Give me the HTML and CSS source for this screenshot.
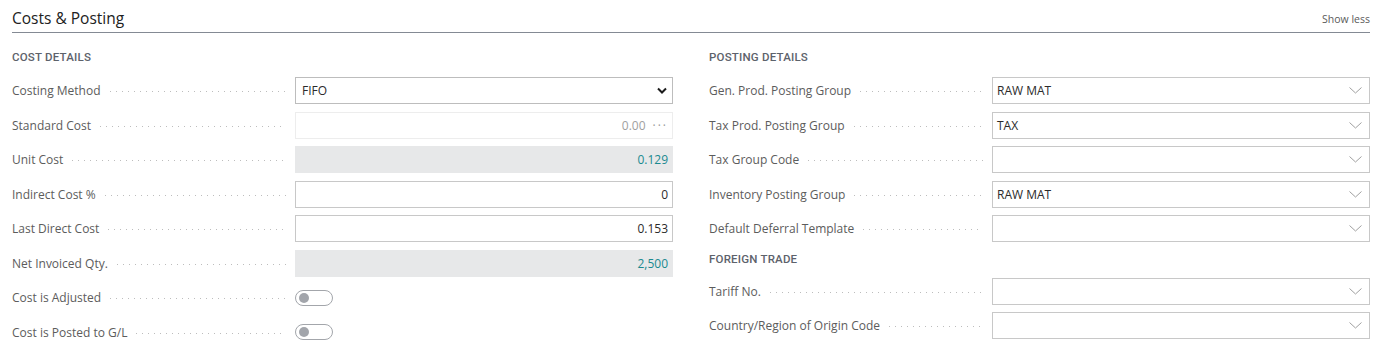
FILE: index.html
```html
<!DOCTYPE html>
<html>
<head>
<meta charset="utf-8">
<link rel="stylesheet" href="styles.css">
</head>
<body>
<div class="page">
  <div class="header">
    <h2 class="title">Costs &amp; Posting</h2>
    <span class="show-less">Show less</span>
  </div>
  <div class="cols">
    <div class="col">
      <div class="group-title">COST DETAILS</div>
      <div class="row">
        <div class="label"><span>Costing Method</span><i class="dots"></i></div>
        <div class="field select"><span class="val">FIFO</span>
          <svg class="chev-bold" width="10" height="7" viewBox="0 0 10 7"><polyline points="1,1.5 5,5.5 9,1.5" fill="none" stroke="#1b1b1b" stroke-width="2"/></svg>
        </div>
      </div>
      <div class="row">
        <div class="label"><span>Standard Cost</span><i class="dots"></i></div>
        <div class="field disabled right"><span class="val">0.00</span><span class="ellip">&middot;&middot;&middot;</span></div>
      </div>
      <div class="row">
        <div class="label"><span>Unit Cost</span><i class="dots"></i></div>
        <div class="field readonly right"><span class="val">0.129</span></div>
      </div>
      <div class="row">
        <div class="label"><span>Indirect Cost %</span><i class="dots"></i></div>
        <div class="field right"><span class="val">0</span></div>
      </div>
      <div class="row">
        <div class="label"><span>Last Direct Cost</span><i class="dots"></i></div>
        <div class="field right"><span class="val">0.153</span></div>
      </div>
      <div class="row">
        <div class="label"><span>Net Invoiced Qty.</span><i class="dots"></i></div>
        <div class="field readonly right"><span class="val">2,500</span></div>
      </div>
      <div class="row">
        <div class="label"><span>Cost is Adjusted</span><i class="dots"></i></div>
        <div class="toggle-wrap"><span class="toggle"><span class="knob"></span></span></div>
      </div>
      <div class="row">
        <div class="label"><span>Cost is Posted to G/L</span><i class="dots"></i></div>
        <div class="toggle-wrap"><span class="toggle"><span class="knob"></span></span></div>
      </div>
    </div>
    <div class="col">
      <div class="group-title">POSTING DETAILS</div>
      <div class="row">
        <div class="label"><span>Gen. Prod. Posting Group</span><i class="dots"></i></div>
        <div class="field lookup"><span class="val">RAW MAT</span>
          <svg class="chev" width="13" height="7" viewBox="0 0 13 7"><polyline points="0.5,0.5 6.5,6 12.5,0.5" fill="none" stroke="#a0a0a0" stroke-width="1"/></svg>
        </div>
      </div>
      <div class="row">
        <div class="label"><span>Tax Prod. Posting Group</span><i class="dots"></i></div>
        <div class="field lookup"><span class="val">TAX</span>
          <svg class="chev" width="13" height="7" viewBox="0 0 13 7"><polyline points="0.5,0.5 6.5,6 12.5,0.5" fill="none" stroke="#a0a0a0" stroke-width="1"/></svg>
        </div>
      </div>
      <div class="row">
        <div class="label"><span>Tax Group Code</span><i class="dots"></i></div>
        <div class="field lookup"><span class="val"></span>
          <svg class="chev" width="13" height="7" viewBox="0 0 13 7"><polyline points="0.5,0.5 6.5,6 12.5,0.5" fill="none" stroke="#a0a0a0" stroke-width="1"/></svg>
        </div>
      </div>
      <div class="row">
        <div class="label"><span>Inventory Posting Group</span><i class="dots"></i></div>
        <div class="field lookup"><span class="val">RAW MAT</span>
          <svg class="chev" width="13" height="7" viewBox="0 0 13 7"><polyline points="0.5,0.5 6.5,6 12.5,0.5" fill="none" stroke="#a0a0a0" stroke-width="1"/></svg>
        </div>
      </div>
      <div class="row">
        <div class="label"><span>Default Deferral Template</span><i class="dots"></i></div>
        <div class="field lookup"><span class="val"></span>
          <svg class="chev" width="13" height="7" viewBox="0 0 13 7"><polyline points="0.5,0.5 6.5,6 12.5,0.5" fill="none" stroke="#a0a0a0" stroke-width="1"/></svg>
        </div>
      </div>
      <div class="group-title sub">FOREIGN TRADE</div>
      <div class="row">
        <div class="label"><span>Tariff No.</span><i class="dots"></i></div>
        <div class="field lookup"><span class="val"></span>
          <svg class="chev" width="13" height="7" viewBox="0 0 13 7"><polyline points="0.5,0.5 6.5,6 12.5,0.5" fill="none" stroke="#a0a0a0" stroke-width="1"/></svg>
        </div>
      </div>
      <div class="row">
        <div class="label"><span>Country/Region of Origin Code</span><i class="dots"></i></div>
        <div class="field lookup"><span class="val"></span>
          <svg class="chev" width="13" height="7" viewBox="0 0 13 7"><polyline points="0.5,0.5 6.5,6 12.5,0.5" fill="none" stroke="#a0a0a0" stroke-width="1"/></svg>
        </div>
      </div>
    </div>
  </div>
</div>
</body>
</html>
```
FILE: styles.css
```css
* { box-sizing: border-box; }
html, body { margin: 0; padding: 0; background: #ffffff; }
body {
  font-family: "Open Sans", "Noto Sans", sans-serif;
  color: #262626;
  font-size: 12px;
}
.page {
  padding: 0 22px 0 12px;
}
.header {
  display: flex;
  justify-content: space-between;
  align-items: flex-end;
  height: 33px;
  border-bottom: 1px solid #848a94;
  padding-bottom: 4px;
}
.title {
  margin: 0;
  font-size: 15.5px;
  font-weight: 400;
  line-height: 20px;
  color: #212121;
}
.show-less {
  font-size: 10.5px;
  color: #5a5a5a;
  line-height: 14px;
  margin-bottom: 2px;
}
.cols {
  display: grid;
  grid-template-columns: 661px 661px;
  column-gap: 36px;
}
.col {
  display: flex;
  flex-direction: column;
}
.group-title {
  font-family: "Roboto", "Open Sans", sans-serif;
  font-weight: 500;
  font-size: 11.5px;
  color: #5d626b;
  line-height: 18px;
  margin-top: 15px;
  margin-bottom: 11px;
  letter-spacing: 0.2px;
}
.group-title.sub {
  margin-top: 0;
  margin-bottom: 10px;
}
.row {
  display: flex;
  height: 27px;
  margin-bottom: 7.5px;
  align-items: center;
}
.label {
  width: 283px;
  flex: none;
  display: flex;
  align-items: center;
  color: #5c5c5c;
  white-space: nowrap;
}
.dots {
  flex: 1;
  height: 1px;
  margin: 2px 9px 0 9px;
  background-image: linear-gradient(to right, #bdbdbd 1px, transparent 1px);
  background-size: 6px 1px;
  background-repeat: repeat-x;
}
.field {
  flex: 1;
  height: 27px;
  border: 1px solid #c8c8c8;
  background: #fff;
  display: flex;
  align-items: center;
  padding: 0 4px 0 4px;
  color: #2b2b2b;
}
.field.right { justify-content: flex-end; }
.field.select { padding-left: 6px; justify-content: space-between; padding-right: 5px; border-color: #bdbdbd; }
.field.disabled {
  border-color: #ededed;
  color: #a0a0a0;
}
.field.disabled .ellip {
  margin-left: 7px;
  letter-spacing: 2px;
  color: #9a9a9a;
  margin-right: 0px;
}
.field.readonly {
  background: #e7e8e9;
  border-color: #e7e8e9;
  color: #1a8a90;
}
.field.lookup {
  justify-content: space-between;
  padding-right: 7px;
}
.chev { display: block; }
.chev-bold { display: block; }
.toggle-wrap {
  flex: 1;
  display: flex;
  align-items: center;
}
.toggle {
  width: 38px;
  height: 16px;
  border: 1px solid #a3a6ab;
  border-radius: 8px;
  display: flex;
  align-items: center;
  padding-left: 3px;
  background: #fff;
}
.knob {
  width: 10px;
  height: 10px;
  border-radius: 50%;
  background: #a2a5ab;
}
```
